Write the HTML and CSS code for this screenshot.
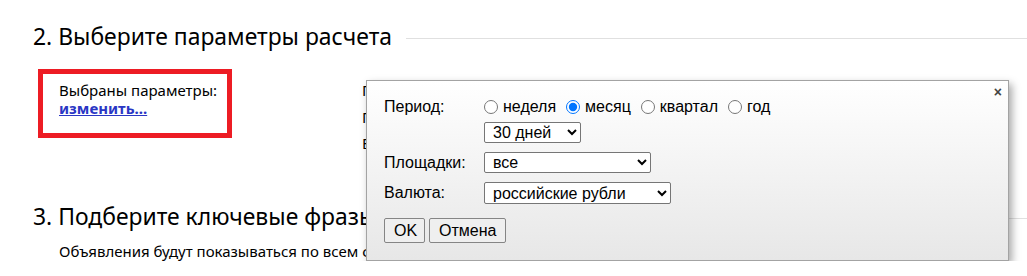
FILE: index.html
```html
<!DOCTYPE html>
<html lang="ru">
<head>
    <meta charset="UTF-8">
    <title>Прогноз бюджета</title>
    <link rel="stylesheet" href="styles.css">
</head>
<body>
    <div class="page">
        <h2 class="stepTitle">2. Выберите параметры расчета</h2>
        <div class="params">
            <div class="chosen">
                Выбраны параметры:<br>
                <a href="#" class="change">изменить...</a>
            </div>
            <ul class="paramList">
                <li>Период: 30 дней</li>
                <li>Площадки: все</li>
                <li>Валюта: российские рубли</li>
            </ul>
        </div>
        <h2 class="stepTitle">3. Подберите ключевые фразы</h2>
        <p class="note">Объявления будут показываться по всем фразам, которые вы добавите в список ниже.</p>

        <div class="popup">
            <span class="close">×</span>
            <div class="form">
                <div class="label">Период:</div>
                <div class="field">
                    <div class="radios">
                        <label><input type="radio" name="period">неделя</label>
                        <label><input type="radio" name="period" checked>месяц</label>
                        <label><input type="radio" name="period">квартал</label>
                        <label><input type="radio" name="period">год</label>
                    </div>
                    <select class="sel selDays">
                        <option>30 дней</option>
                    </select>
                </div>
                <div class="label">Площадки:</div>
                <div class="field">
                    <select class="sel selPlaces">
                        <option>все</option>
                    </select>
                </div>
                <div class="label">Валюта:</div>
                <div class="field">
                    <select class="sel selMoney">
                        <option>российские рубли</option>
                    </select>
                </div>
            </div>
            <div class="buttons">
                <button type="button" class="btn btnOk">OK</button>
                <button type="button" class="btn">Отмена</button>
            </div>
        </div>
    </div>
</body>
</html>
```

FILE: styles.css
```css
body{
    margin: 0;
    background: #fff;
    color: #000;
    font-family: "Noto Sans", "Open Sans", sans-serif;
}
.page{
    position: relative;
    padding: 21px 0 0 33px;
}
.stepTitle{
    display: flex;
    align-items: center;
    margin: 0;
    font-size: 22.9px;
    line-height: 32px;
    font-weight: normal;
}
.stepTitle::after{
    content: "";
    flex: 1;
    height: 1px;
    margin-left: 14px;
    margin-top: 2px;
    background: #e0e0e0;
}
.params{
    display: flex;
    margin: 16px 0 0 5px;
    height: 132px;
}
.chosen{
    width: 168px;
    height: 52px;
    padding: 7px 0 0 16px;
    border: 5px solid #ed1c24;
    font-size: 15px;
    line-height: 18px;
}
.change{
    color: #2a36c4;
    font-weight: bold;
}
.paramList{
    list-style: none;
    margin: 8px 0 0 130px;
    padding: 0;
    font-size: 15px;
    line-height: 26.5px;
}
.note{
    margin: 8px 0 0 26px;
    font-size: 15px;
    line-height: 20px;
}

.popup{
    position: absolute;
    left: 366px;
    top: 80px;
    width: 607px;
    height: 147px;
    padding: 16px 17px 16px 17px;
    border: 1px solid #a3a3a3;
    background: linear-gradient(#ffffff, #e7e7e7);
    box-shadow: 3px 4px 8px rgba(0, 0, 0, 0.35);
    font-family: "Liberation Sans", Arial, sans-serif;
    font-size: 16px;
}
.close{
    position: absolute;
    top: 3px;
    right: 6px;
    font-size: 14px;
    font-weight: bold;
    color: #444;
}
.form{
    display: grid;
    grid-template-columns: 100px auto;
    row-gap: 9px;
    align-items: center;
}
.field{
    display: flex;
    flex-direction: column;
    align-items: flex-start;
}
.radios{
    display: flex;
    height: 20px;
    align-items: center;
    margin-bottom: 5px;
}
.radios label{
    display: flex;
    align-items: center;
    margin-right: 10px;
}
.radios input{
    width: 14px;
    height: 14px;
    margin: 0 5px 0 0;
}
.form .label:first-child{
    align-self: start;
    line-height: 20px;
}
.sel{
    height: 21px;
    padding: 0 4px;
    font-family: "Liberation Sans", Arial, sans-serif;
    font-size: 16px;
    border: 1px solid #767676;
    border-radius: 2px;
    background: #fff;
    color: #000;
}
.selDays{
    width: 97px;
}
.selPlaces{
    width: 167px;
}
.selMoney{
    width: 187px;
    height: 22px;
}
.buttons{
    display: flex;
    gap: 4px;
    margin-top: 14px;
}
.btn{
    height: 25px;
    padding: 0 9px;
    font-family: "Liberation Sans", Arial, sans-serif;
    font-size: 16px;
    background: #efefef;
    border: 1px solid #858585;
    border-radius: 2px;
    color: #000;
}
.btnOk{
    width: 41px;
}
```
